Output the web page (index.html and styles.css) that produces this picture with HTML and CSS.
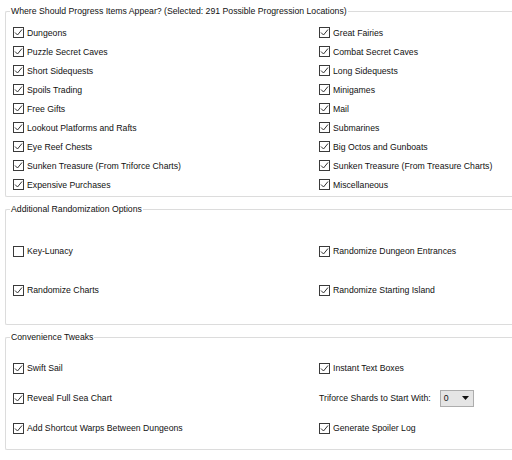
FILE: index.html
```html
<!DOCTYPE html>
<html>
<head>
<meta charset="utf-8">
<link rel="stylesheet" href="styles.css">
</head>
<body>
<div class="page">
  <fieldset class="group g1">
    <legend>Where Should Progress Items Appear? (Selected: 291 Possible Progression Locations)</legend>
    <div class="grid rows19">
      <label class="cb"><svg class="box" viewBox="0 0 11 11"><rect x="0.5" y="0.5" width="10" height="10"/><path d="M2 5.5 L4.5 8 L9 2.5"/></svg>Dungeons</label>
      <label class="cb"><svg class="box" viewBox="0 0 11 11"><rect x="0.5" y="0.5" width="10" height="10"/><path d="M2 5.5 L4.5 8 L9 2.5"/></svg>Great Fairies</label>
      <label class="cb"><svg class="box" viewBox="0 0 11 11"><rect x="0.5" y="0.5" width="10" height="10"/><path d="M2 5.5 L4.5 8 L9 2.5"/></svg>Puzzle Secret Caves</label>
      <label class="cb"><svg class="box" viewBox="0 0 11 11"><rect x="0.5" y="0.5" width="10" height="10"/><path d="M2 5.5 L4.5 8 L9 2.5"/></svg>Combat Secret Caves</label>
      <label class="cb"><svg class="box" viewBox="0 0 11 11"><rect x="0.5" y="0.5" width="10" height="10"/><path d="M2 5.5 L4.5 8 L9 2.5"/></svg>Short Sidequests</label>
      <label class="cb"><svg class="box" viewBox="0 0 11 11"><rect x="0.5" y="0.5" width="10" height="10"/><path d="M2 5.5 L4.5 8 L9 2.5"/></svg>Long Sidequests</label>
      <label class="cb"><svg class="box" viewBox="0 0 11 11"><rect x="0.5" y="0.5" width="10" height="10"/><path d="M2 5.5 L4.5 8 L9 2.5"/></svg>Spoils Trading</label>
      <label class="cb"><svg class="box" viewBox="0 0 11 11"><rect x="0.5" y="0.5" width="10" height="10"/><path d="M2 5.5 L4.5 8 L9 2.5"/></svg>Minigames</label>
      <label class="cb"><svg class="box" viewBox="0 0 11 11"><rect x="0.5" y="0.5" width="10" height="10"/><path d="M2 5.5 L4.5 8 L9 2.5"/></svg>Free Gifts</label>
      <label class="cb"><svg class="box" viewBox="0 0 11 11"><rect x="0.5" y="0.5" width="10" height="10"/><path d="M2 5.5 L4.5 8 L9 2.5"/></svg>Mail</label>
      <label class="cb"><svg class="box" viewBox="0 0 11 11"><rect x="0.5" y="0.5" width="10" height="10"/><path d="M2 5.5 L4.5 8 L9 2.5"/></svg>Lookout Platforms and Rafts</label>
      <label class="cb"><svg class="box" viewBox="0 0 11 11"><rect x="0.5" y="0.5" width="10" height="10"/><path d="M2 5.5 L4.5 8 L9 2.5"/></svg>Submarines</label>
      <label class="cb"><svg class="box" viewBox="0 0 11 11"><rect x="0.5" y="0.5" width="10" height="10"/><path d="M2 5.5 L4.5 8 L9 2.5"/></svg>Eye Reef Chests</label>
      <label class="cb"><svg class="box" viewBox="0 0 11 11"><rect x="0.5" y="0.5" width="10" height="10"/><path d="M2 5.5 L4.5 8 L9 2.5"/></svg>Big Octos and Gunboats</label>
      <label class="cb"><svg class="box" viewBox="0 0 11 11"><rect x="0.5" y="0.5" width="10" height="10"/><path d="M2 5.5 L4.5 8 L9 2.5"/></svg>Sunken Treasure (From Triforce Charts)</label>
      <label class="cb"><svg class="box" viewBox="0 0 11 11"><rect x="0.5" y="0.5" width="10" height="10"/><path d="M2 5.5 L4.5 8 L9 2.5"/></svg>Sunken Treasure (From Treasure Charts)</label>
      <label class="cb"><svg class="box" viewBox="0 0 11 11"><rect x="0.5" y="0.5" width="10" height="10"/><path d="M2 5.5 L4.5 8 L9 2.5"/></svg>Expensive Purchases</label>
      <label class="cb"><svg class="box" viewBox="0 0 11 11"><rect x="0.5" y="0.5" width="10" height="10"/><path d="M2 5.5 L4.5 8 L9 2.5"/></svg>Miscellaneous</label>
    </div>
  </fieldset>

  <fieldset class="group g2">
    <legend>Additional Randomization Options</legend>
    <div class="grid rows-wide">
      <label class="cb"><svg class="box" viewBox="0 0 11 11"><rect x="0.5" y="0.5" width="10" height="10"/></svg>Key-Lunacy</label>
      <label class="cb"><svg class="box" viewBox="0 0 11 11"><rect x="0.5" y="0.5" width="10" height="10"/><path d="M2 5.5 L4.5 8 L9 2.5"/></svg>Randomize Dungeon Entrances</label>
      <label class="cb"><svg class="box" viewBox="0 0 11 11"><rect x="0.5" y="0.5" width="10" height="10"/><path d="M2 5.5 L4.5 8 L9 2.5"/></svg>Randomize Charts</label>
      <label class="cb"><svg class="box" viewBox="0 0 11 11"><rect x="0.5" y="0.5" width="10" height="10"/><path d="M2 5.5 L4.5 8 L9 2.5"/></svg>Randomize Starting Island</label>
    </div>
  </fieldset>

  <fieldset class="group g3">
    <legend>Convenience Tweaks</legend>
    <div class="grid rows-mid">
      <label class="cb"><svg class="box" viewBox="0 0 11 11"><rect x="0.5" y="0.5" width="10" height="10"/><path d="M2 5.5 L4.5 8 L9 2.5"/></svg>Swift Sail</label>
      <label class="cb"><svg class="box" viewBox="0 0 11 11"><rect x="0.5" y="0.5" width="10" height="10"/><path d="M2 5.5 L4.5 8 L9 2.5"/></svg>Instant Text Boxes</label>
      <label class="cb"><svg class="box" viewBox="0 0 11 11"><rect x="0.5" y="0.5" width="10" height="10"/><path d="M2 5.5 L4.5 8 L9 2.5"/></svg>Reveal Full Sea Chart</label>
      <div class="field">
        <span class="field-label">Triforce Shards to Start With:</span>
        <span class="combo"><span class="combo-value">0</span><svg class="combo-arrow" viewBox="0 0 7 4"><path d="M0 0 H7 L3.5 4 Z"/></svg></span>
      </div>
      <label class="cb"><svg class="box" viewBox="0 0 11 11"><rect x="0.5" y="0.5" width="10" height="10"/><path d="M2 5.5 L4.5 8 L9 2.5"/></svg>Add Shortcut Warps Between Dungeons</label>
      <label class="cb"><svg class="box" viewBox="0 0 11 11"><rect x="0.5" y="0.5" width="10" height="10"/><path d="M2 5.5 L4.5 8 L9 2.5"/></svg>Generate Spoiler Log</label>
    </div>
  </fieldset>
</div>
</body>
</html>
```

FILE: styles.css
```css
html, body {
  margin: 0;
  padding: 0;
  background: #ffffff;
  overflow: hidden;
}

body {
  font-family: "Liberation Sans", Arial, sans-serif;
  font-size: 8.7px;
  color: #111111;
  width: 512px;
  height: 460px;
}

.page {
  width: 507px;
  padding-left: 5px;
  display: flex;
  flex-direction: column;
}

.group {
  margin: 0;
  border: 1px solid #dcdcdc;
  border-right: none;
  border-radius: 2px 0 0 2px;
  padding: 0 0 0 7px;
  min-inline-size: 0;
}

.group legend {
  padding: 0 1px;
  margin-left: -3px;
  line-height: 12px;
  color: #111111;
}

.g1 {
  margin-top: 5px;
  padding-top: 6px;
  padding-bottom: 2px;
}

.g2 {
  margin-top: 6px;
  padding-top: 26px;
  padding-bottom: 24px;
}

.g3 {
  margin-top: 6px;
  padding-top: 15px;
  padding-bottom: 11px;
}

.grid {
  display: grid;
  grid-template-columns: 306px 1fr;
}

.rows19 {
  grid-auto-rows: 19px;
}

.rows-wide {
  grid-auto-rows: 20px;
  row-gap: 19px;
}

.rows-mid {
  grid-auto-rows: 20px;
  row-gap: 10px;
}

.cb {
  display: flex;
  align-items: center;
  gap: 3px;
  white-space: nowrap;
}

.box {
  width: 11px;
  height: 11px;
  flex: none;
}

.box rect {
  fill: #ffffff;
  stroke: #3a3a3a;
  stroke-width: 1;
}

.box path {
  fill: none;
  stroke: #333333;
  stroke-width: 1;
}

.field {
  display: flex;
  align-items: center;
  white-space: nowrap;
}

.field-label {
  margin-right: 9px;
}

.combo {
  box-sizing: border-box;
  width: 34px;
  height: 17px;
  background: #e5e5e5;
  border: 1px solid #adadad;
  display: flex;
  align-items: center;
  justify-content: space-between;
  padding: 0 4px 0 3px;
}

.combo-arrow {
  width: 7px;
  height: 4px;
}

.combo-arrow path {
  fill: #111111;
}
```
